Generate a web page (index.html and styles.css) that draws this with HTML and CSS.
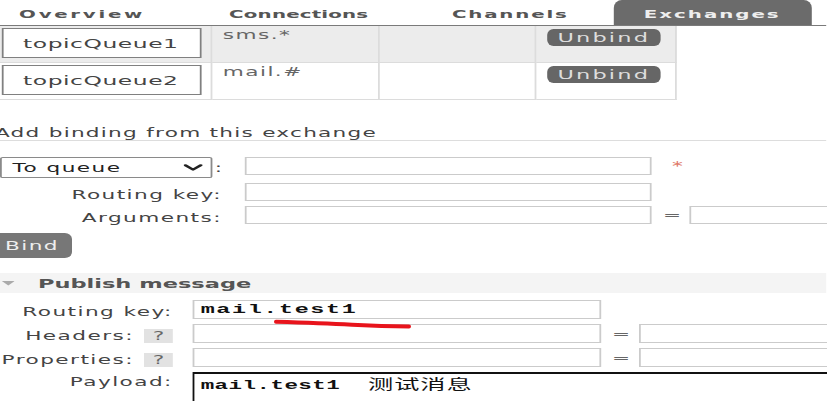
FILE: index.html
```html
<!DOCTYPE html>
<html lang="en">
<head>
<meta charset="utf-8">
<title>Exchange: topic</title>
<link rel="stylesheet" href="styles.css">
</head>
<body>
<div class="stage">
  <ul class="tabs">
    <li class="tab tab-overview">Overview</li>
    <li class="tab tab-connections">Connections</li>
    <li class="tab tab-channels">Channels</li>
    <li class="tab tab-exchanges tab-active">Exchanges</li>
  </ul>

  <table class="bindings">
    <colgroup>
      <col class="c-q"><col class="c-k"><col class="c-a"><col class="c-b">
    </colgroup>
    <tr class="row-alt">
      <td class="cell-q"><div class="qbox">topicQueue1</div></td>
      <td class="cell-key">sms.*</td>
      <td class="cell-args"></td>
      <td class="cell-btn"><button class="btn-unbind">Unbind</button></td>
    </tr>
    <tr class="row-plain">
      <td class="cell-q"><div class="qbox">topicQueue2</div></td>
      <td class="cell-key">mail.#</td>
      <td class="cell-args"></td>
      <td class="cell-btn"><button class="btn-unbind">Unbind</button></td>
    </tr>
  </table>

  <h3 class="sub">Add binding from this exchange</h3>

  <div class="bind-form">
    <div class="lbl lbl-sel">
      <div class="select"><span>To queue</span>
        <svg class="chev" width="10.5" height="7" viewBox="0 0 10.5 7"><polyline points="1,1.2 5.25,5.6 9.5,1.2" fill="none" stroke="#222" stroke-width="2" stroke-linecap="round" stroke-linejoin="round"/></svg>
      </div>
      <span class="colon">:</span>
    </div>
    <input class="field" type="text">
    <div class="extra"><span class="req">*</span></div>

    <div class="lbl lbl-text">Routing key:</div>
    <input class="field" type="text">
    <div class="extra"></div>

    <div class="lbl lbl-text">Arguments:</div>
    <input class="field" type="text">
    <div class="extra eq-wrap"><span class="eq">=</span><input class="field field-wide" type="text"></div>
  </div>

  <button class="btn-bind">Bind</button>

  <div class="pub-h">
    <svg class="tri" width="7.2" height="5" viewBox="0 0 7.2 5"><polygon points="0,0 7.2,0 3.6,4.6" fill="#aaa"/></svg>
    <span class="pub-title">Publish message</span>
  </div>

  <div class="pub-form">
    <div class="plbl">Routing key:</div>
    <input class="field field-mono" type="text" value="mail.test1">
    <div class="extra"></div>

    <div class="plbl">Headers: <span class="help">?</span></div>
    <input class="field" type="text">
    <div class="extra eq-wrap pub-eq"><span class="eq">=</span><input class="field field-wide" type="text"></div>

    <div class="plbl">Properties: <span class="help">?</span></div>
    <input class="field" type="text">
    <div class="extra eq-wrap pub-eq"><span class="eq">=</span><input class="field field-wide" type="text"></div>

    <div class="plbl plbl-top">Payload:</div>
    <div class="payload" role="textbox"><span class="pl-latin">mail.test1  </span><span class="pl-cjk">测试消息</span></div>
  </div>
</div>

<svg class="mark" width="827" height="401" viewBox="0 0 827 401">
  <path d="M276 321.8 Q322 323.2 352 324.8 T409 326.6" fill="none" stroke="#e8141c" stroke-width="4" stroke-linecap="round"/>
</svg>
</body>
</html>
```

FILE: styles.css
```css
html, body {
  margin: 0;
  padding: 0;
  width: 827px;
  height: 401px;
  overflow: hidden;
  background: #fff;
}

.stage {
  width: 459.4px;
  transform: scaleX(1.8);
  transform-origin: 0 0;
  font-family: "DejaVu Sans", Verdana, sans-serif;
  font-size: 12px;
  letter-spacing: 0.8px;
  color: #444;
}

/* tabs */
.tabs {
  display: flex;
  gap: 8px;
  list-style: none;
  margin: 0 0 0 -6.4px;
  padding: 0;
  height: 25px;
  border-bottom: 1px solid #7a7a7a;
}
.tab {
  height: 25px;
  box-sizing: border-box;
  padding-top: 3px;
  display: flex;
  align-items: center;
  justify-content: center;
  font-weight: bold;
  font-size: 11px;
  color: #555;
}
.tab-overview { width: 104px; letter-spacing: 1.5px; }
.tab-connections { width: 120.7px; letter-spacing: 0.1px; }
.tab-channels { width: 98.4px; letter-spacing: 1px; }
.tab-exchanges { width: 110px; letter-spacing: 1.1px; }
.tab-active {
  background: #6b6b6b;
  color: #eee;
  border-radius: 4.5px 4.5px 0 0 / 8px 8px 0 0;
}

/* bindings table */
.bindings {
  border-collapse: collapse;
  table-layout: fixed;
  width: 375.6px;
}
.c-q { width: 117.8px; }
.c-k { width: 92.8px; }
.c-a { width: 87.2px; }
.c-b { width: 77.8px; }
.bindings td {
  border-right: 1px solid #dcdcdc;
  border-bottom: 1px solid #dcdcdc;
  padding: 2px 0 0 0;
  vertical-align: top;
  height: 34px;
}
.row-alt td { background: #ececec; }
.row-plain td { background: #fff; }
.qbox {
  width: 111px;
  height: 30px;
  margin-left: 0.5px;
  box-sizing: border-box;
  border: 1px solid #808080;
  background: #fff;
  display: flex;
  align-items: center;
  justify-content: center;
  font-size: 13px;
  letter-spacing: 0.3px;
  color: #444;
}
.cell-key {
  padding-left: 5.5px !important;
  color: #666;
  line-height: 15px;
}
.btn-unbind {
  display: flex;
  align-items: center;
  justify-content: center;
  margin: 1px 0 0 5.5px;
  width: 63.3px;
  height: 17px;
  padding: 0;
  border: none;
  border-radius: 3.5px / 6px;
  background: #666;
  color: #ddd;
  font-family: "DejaVu Sans", Verdana, sans-serif;
  font-size: 12.5px;
  letter-spacing: 1.2px;
}

/* add binding */
.sub {
  margin: 25.5px 0 0 -2.8px;
  font-size: 12px;
  font-weight: normal;
  line-height: 14px;
  letter-spacing: 0.7px;
  color: #444;
  border-bottom: 1px solid #ddd;
}
.bind-form {
  display: grid;
  grid-template-columns: 136.1px 226.1px 1fr;
  row-gap: 5px;
  margin-top: 16.5px;
  align-items: start;
}
.lbl {
  text-align: right;
  padding-right: 12.8px;
  line-height: 18px;
  color: #444;
}
.lbl-text {
  box-sizing: border-box;
  height: 18px;
  padding-top: 3px;
}
.lbl-sel {
  display: flex;
  justify-content: space-between;
  align-items: center;
  height: 21px;
}
.select {
  width: 118.3px;
  height: 21px;
  box-sizing: border-box;
  border: 1px solid #8a8a8a;
  border-radius: 1.5px;
  display: flex;
  align-items: center;
  justify-content: space-between;
  padding: 0 4.5px 0 6px;
  color: #222;
  background: #fff;
}
.colon { letter-spacing: 0; color: #444; }
.field {
  display: block;
  width: 100%;
  height: 18px;
  box-sizing: border-box;
  margin: 0;
  padding: 0 3px;
  border: 1px solid #cbcbcb;
  background: #fff;
  font-family: "DejaVu Sans", Verdana, sans-serif;
  font-size: 12px;
}
.extra { line-height: 18px; }
.req {
  margin-left: 11.1px;
  color: #e07a6a;
  letter-spacing: 0;
}
.eq-wrap {
  display: flex;
  align-items: center;
  height: 18px;
}
.eq {
  margin-left: 6.1px;
  color: #666;
  letter-spacing: 0;
}
.field-wide {
  flex: 1;
  width: auto;
  margin-left: 4.5px;
  min-width: 0;
}
.btn-bind {
  display: block;
  margin: 9px 0 0 -6px;
  width: 46px;
  height: 25px;
  padding: 0 0 0 8.8px;
  text-align: left;
  border: none;
  border-radius: 0 4px 4px 0 / 0 6px 6px 0;
  background: #777;
  color: #eee;
  font-family: "DejaVu Sans", Verdana, sans-serif;
  font-size: 12px;
  letter-spacing: 0.8px;
}

/* publish */
.pub-h {
  margin-top: 15px;
  height: 20px;
  background: #f4f4f4;
  display: flex;
  align-items: center;
}
.tri { margin-left: 1.1px; }
.pub-title {
  margin-left: 12.8px;
  font-weight: bold;
  font-size: 12.5px;
  letter-spacing: 0;
  color: #555;
}
.pub-form {
  display: grid;
  grid-template-columns: 107.2px 226.7px 1fr;
  row-gap: 5px;
  margin-top: 7px;
  align-items: start;
}
.pub-form .field { height: 19px; }
.plbl {
  box-sizing: border-box;
  height: 19px;
  display: flex;
  justify-content: flex-end;
  align-items: flex-start;
  padding: 5px 11.2px 0 0;
  line-height: 15px;
  color: #444;
  white-space: pre;
}
.plbl-top {
  padding-top: 3px;
}
.help {
  align-self: flex-end;
  display: inline-flex;
  align-items: center;
  justify-content: center;
  width: 16px;
  height: 14px;
  margin-left: 1px;
  background: #e2e2e2;
  color: #666;
  letter-spacing: 0;
  line-height: 14px;
}
.pub-eq { height: 19px; }
.field-mono {
  font-family: "Liberation Mono", monospace;
  font-weight: bold;
  font-size: 13px;
  letter-spacing: 0.9px;
  color: #111;
  padding-left: 3.3px;
}
.payload {
  grid-column: 2 / 4;
  justify-self: start;
  width: 380px;
  height: 44px;
  box-sizing: border-box;
  padding: 1px 3.3px;
  border: 2px solid #111;
  border-left-width: 1.5px;
  overflow: hidden;
  white-space: pre;
  line-height: 16px;
  color: #111;
  background: #fff;
}
.pl-latin {
  font-family: "Liberation Mono", monospace;
  font-weight: bold;
  font-size: 12.5px;
  letter-spacing: 0.25px;
}
.pl-cjk {
  font-family: "Noto Sans CJK SC", sans-serif;
  font-size: 14px;
  letter-spacing: 0.5px;
}

.mark {
  position: absolute;
  left: 0;
  top: 0;
  pointer-events: none;
}
```
